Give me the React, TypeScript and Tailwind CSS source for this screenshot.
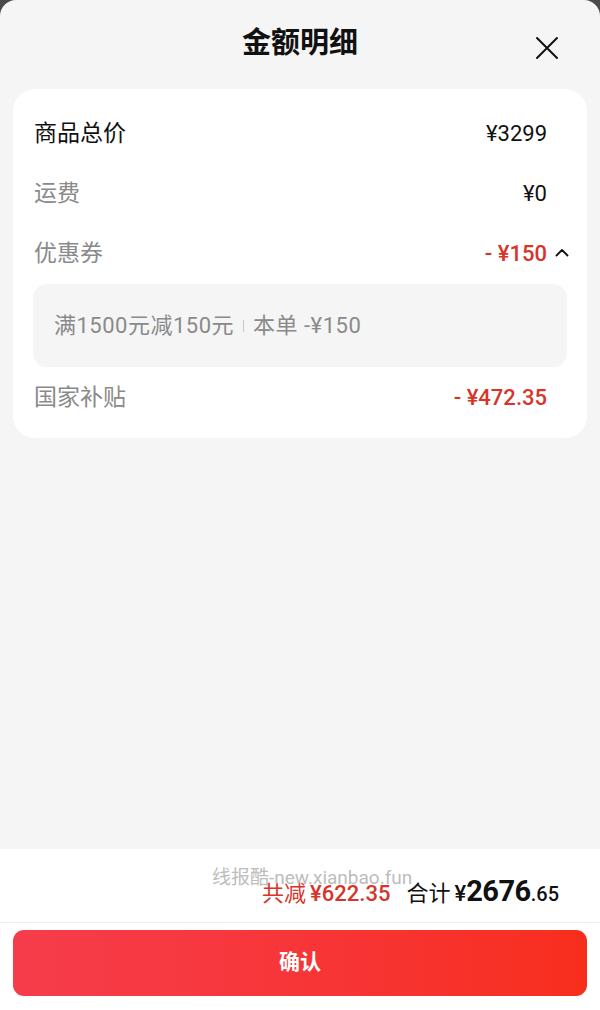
import React from 'react';

const FONT = "font-['Roboto','Noto_Sans_CJK_SC',sans-serif]";

function Row({ label, value, dark, red, caret }: { label: string; value: string; dark?: boolean; red?: boolean; caret?: boolean }) {
  return (
    <div className="h-[60px] flex items-center justify-between pl-[21px] pr-[40px]">
      <span className={`text-[23px] pt-[3px] ${dark ? 'text-[#111]' : 'text-[#8a8a8a]'}`}>{label}</span>
      <span className="relative flex items-center">
        <span className={`text-[22px] ${red ? 'text-[#d8342a] font-medium' : 'text-[#111]'}`}>{value}</span>
        {caret && (
          <svg className="absolute left-[100%] ml-[8px]" width="14" height="10" viewBox="0 0 14 10" fill="none">
            <path d="M1.5 7.5 L7 2 L12.5 7.5" stroke="#111" strokeWidth="1.8" strokeLinecap="round" strokeLinejoin="round" />
          </svg>
        )}
      </span>
    </div>
  );
}

export default function App() {
  return (
    <div className={`w-[600px] h-[1010px] bg-[#4a4a4a] ${FONT}`}>
      <div className="h-full bg-[#f5f5f5] rounded-t-[16px] flex flex-col overflow-hidden">
        {/* header */}
        <div className="h-[89px] relative flex items-center justify-center pb-[1px]">
          <h1 className="text-[29px] font-bold text-[#111]">金额明细</h1>
          <svg className="absolute right-[41px] top-[36px]" width="24" height="24" viewBox="0 0 24 24" fill="none">
            <path d="M2 2 L22 22 M22 2 L2 22" stroke="#111" strokeWidth="2" strokeLinecap="round" />
          </svg>
        </div>

        {/* detail card */}
        <div className="mx-[13px] bg-white rounded-[22px] pt-[14px] pb-[11px]">
          <Row label="商品总价" value="¥3299" dark />
          <Row label="运费" value="¥0" />
          <Row label="优惠券" value="- ¥150" red caret />
          <div className="mx-[20px] mt-[1px] h-[83px] bg-[#f5f5f5] rounded-[14px] flex items-center pl-[21px] text-[22px] tracking-[0.5px] text-[#8a8a8a]">
            <span>满1500元减150元</span>
            <span className="mx-[9px] w-px h-[12px] bg-[#c8c8c8]" />
            <span>本单 -¥150</span>
          </div>
          <Row label="国家补贴" value="- ¥472.35" red />
        </div>

        <div className="flex-1" />

        {/* bottom */}
        <div className="bg-white">
          <div className="relative h-[73px] flex items-baseline justify-end pr-[41px] pt-[21px]">
            <span className="absolute left-[212px] top-[15px] text-[19px] text-[#b4b4b4]/90">线报酷-new.xianbao.fun</span>
            <span className="text-[22px] text-[#d8342a]">共减</span>
            <span className="ml-[4px] text-[22px] font-medium text-[#d8342a]">¥622.35</span>
            <span className="ml-[16px] text-[22px] text-[#111]">合计</span>
            <span className="ml-[4px] text-[22px] font-medium text-[#111]">¥</span>
            <span className="text-[29px] font-bold text-[#111] tracking-[-0.5px]">2676</span>
            <span className="text-[20px] font-medium text-[#111]">.65</span>
          </div>
          <div className="h-px bg-[#f0f0f0]" />
          <div className="px-[13px] pt-[7px] pb-[14px]">
            <button className="w-full h-[66px] rounded-[11px] bg-gradient-to-r from-[#f63c4b] to-[#f82e1c] text-white text-[21px] font-bold">
              确认
            </button>
          </div>
        </div>
      </div>
    </div>
  );
}
